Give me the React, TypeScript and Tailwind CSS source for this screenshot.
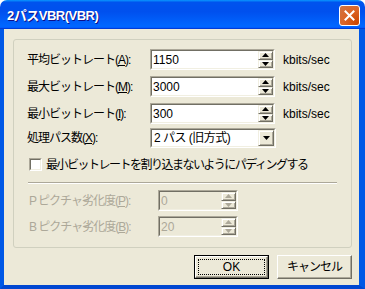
import React from "react";

const FONT = "font-['Liberation_Sans','Noto_Sans_CJK_JP',sans-serif]";

function Arrow({ dir, disabled }: { dir: "up" | "down"; disabled?: boolean }) {
  const fill = disabled ? "#ACA899" : "#000";
  return (
    <svg width="7" height="4" viewBox="0 0 7 4" className="block">
      {dir === "up" ? (
        <polygon points="3.5,0 7,4 0,4" fill={fill} />
      ) : (
        <polygon points="0,0 7,0 3.5,4" fill={fill} />
      )}
    </svg>
  );
}

function RaisedBox({ children, className = "" }: { children?: React.ReactNode; className?: string }) {
  return (
    <div
      className={`bg-[#ECE9D8] border border-t-[#F1EFE2] border-l-[#F1EFE2] border-r-[#716F64] border-b-[#716F64] shadow-[inset_1px_1px_#ffffff,inset_-1px_-1px_#ACA899] flex items-center justify-center ${className}`}
    >
      {children}
    </div>
  );
}

function Spin({ disabled }: { disabled?: boolean }) {
  return (
    <div className="w-[15px] h-full flex flex-col">
      <RaisedBox className="flex-1">
        <Arrow dir="up" disabled={disabled} />
      </RaisedBox>
      <RaisedBox className="flex-1">
        <Arrow dir="down" disabled={disabled} />
      </RaisedBox>
    </div>
  );
}

function Sunken({
  className = "",
  bg = "bg-white",
  children,
}: {
  className?: string;
  bg?: string;
  children?: React.ReactNode;
}) {
  return (
    <div
      className={`border border-t-[#ACA899] border-l-[#ACA899] border-r-white border-b-white ${className}`}
    >
      <div
        className={`h-full border border-t-[#716F64] border-l-[#716F64] border-r-[#F1EFE2] border-b-[#F1EFE2] flex items-stretch ${bg}`}
      >
        {children}
      </div>
    </div>
  );
}

function SpinField({
  value,
  width,
  disabled,
}: {
  value: string;
  width: string;
  disabled?: boolean;
}) {
  return (
    <Sunken className={`${width} h-full`} bg={disabled ? "bg-[#ECE9D8]" : "bg-white"}>
      <div
        className={`flex-1 flex items-center pl-[1px] text-[12px] leading-none ${
          disabled ? "text-[#ACA899]" : "text-black"
        }`}
      >
        {value}
      </div>
      <Spin disabled={disabled} />
    </Sunken>
  );
}

function Label({ children, className = "" }: { children: React.ReactNode; className?: string }) {
  return <span className={`text-[12px] tracking-[-1px] whitespace-nowrap ${className}`}>{children}</span>;
}

export default function App() {
  return (
    <div className={`w-[365px] h-[289px] flex flex-col bg-white ${FONT}`}>
      {/* Title bar */}
      <div className="h-[29px] shrink-0 flex items-start justify-between rounded-t-[7px] bg-[linear-gradient(to_bottom,#0997ff,#0053ee_8%,#0050ee_40%,#0066ff_88%,#0066ff_93%,#005bff_95%,#003dd7_96%,#003dd7)]">
        <span className="ml-[7px] mt-[6px] text-white font-bold text-[13px] tracking-[-0.5px] [text-shadow:1px_1px_#0f1089]">
          2パスVBR(VBR)
        </span>
        <div className="mt-[5px] mr-[5px] w-[21px] h-[21px] rounded-[3px] border border-white bg-[radial-gradient(circle_at_90%_90%,#cc4600_0%,#dc6527_55%,#cd7546_100%)] flex items-center justify-center">
          <svg width="11" height="11" viewBox="0 0 11 11">
            <path d="M1.5 1.5 L9.5 9.5 M9.5 1.5 L1.5 9.5" stroke="#fff" strokeWidth="2" strokeLinecap="square" />
          </svg>
        </div>
      </div>

      {/* Body */}
      <div className="flex-1 flex flex-col bg-[#ECE9D8] border-l-[4px] border-r-[6px] border-b-[4px] border-l-[#0058E6] border-r-[#0058E6] border-b-[#0047D1] text-black">
        {/* Group box */}
        <div className="ml-[9px] mt-[10px] w-[339px] h-[209px] border border-[#D0D0BF] rounded-[3px] flex flex-col pl-[13px] pt-[9px]">
          <div className="flex items-center h-[21px]">
            <Label className="w-[123px]">
              平均ビットレート(<u>A</u>):
            </Label>
            <SpinField value="1150" width="w-[125px]" />
            <span className="ml-[8px] text-[12px]">kbits/sec</span>
          </div>
          <div className="flex items-center h-[21px] mt-[6px]">
            <Label className="w-[123px]">
              最大ビットレート(<u>M</u>):
            </Label>
            <SpinField value="3000" width="w-[125px]" />
            <span className="ml-[8px] text-[12px]">kbits/sec</span>
          </div>
          <div className="flex items-center h-[21px] mt-[6px]">
            <Label className="w-[123px]">
              最小ビットレート(<u>I</u>):
            </Label>
            <SpinField value="300" width="w-[125px]" />
            <span className="ml-[8px] text-[12px]">kbits/sec</span>
          </div>
          <div className="flex items-center h-[20px] mt-[4px]">
            <Label className="w-[123px]">
              処理パス数(<u>X</u>):
            </Label>
            <Sunken className="w-[126px] h-full">
              <div className="flex-1 flex items-center pl-[2px] text-[12px] tracking-[-0.5px] leading-none whitespace-nowrap">
                2 パス (旧方式)
              </div>
              <RaisedBox className="w-[16px]">
                <Arrow dir="down" />
              </RaisedBox>
            </Sunken>
          </div>
          <div className="flex items-center h-[13px] mt-[10px] pl-[2px]">
            <div className="w-[13px] h-[13px] border border-t-[#ACA899] border-l-[#ACA899] border-r-white border-b-white">
              <div className="w-full h-full bg-white border border-t-[#716F64] border-l-[#716F64] border-r-[#F1EFE2] border-b-[#F1EFE2]" />
            </div>
            <span className="ml-[4px] text-[12px] tracking-[-1.5px] whitespace-nowrap">
              最小ビットレートを割り込まないようにパディングする
            </span>
          </div>
          <div className="mt-[11px] ml-[1px] w-[309px] border-t border-t-[#ACA899] border-b border-b-white" />
          <div className="flex items-center h-[21px] mt-[6px] pl-[2px]">
            <Label className="w-[129px] text-[#ACA899]">
              P ピクチャ劣化度(<u>P</u>):
            </Label>
            <SpinField value="0" width="w-[80px]" disabled />
          </div>
          <div className="flex items-center h-[21px] mt-[5px] pl-[2px]">
            <Label className="w-[129px] text-[#ACA899]">
              B ピクチャ劣化度(<u>B</u>):
            </Label>
            <SpinField value="20" width="w-[80px]" disabled />
          </div>
        </div>

        {/* Buttons */}
        <div className="flex justify-end gap-[8px] mt-[7px] pr-[7px]">
          <div className="w-[75px] h-[24px] border border-black">
            <div className="w-full h-full bg-[#ECE9D8] border border-t-white border-l-white border-r-[#716F64] border-b-[#716F64] shadow-[inset_-1px_-1px_#ACA899] p-[2px]">
              <div className="w-full h-full border border-dotted border-black flex items-center justify-center text-[12px] leading-none">
                OK
              </div>
            </div>
          </div>
          <div className="w-[75px] h-[24px] bg-[#ECE9D8] border border-t-white border-l-white border-r-[#716F64] border-b-[#716F64] shadow-[inset_-1px_-1px_#ACA899] flex items-center justify-center">
            <Label>キャンセル</Label>
          </div>
        </div>
      </div>
    </div>
  );
}
